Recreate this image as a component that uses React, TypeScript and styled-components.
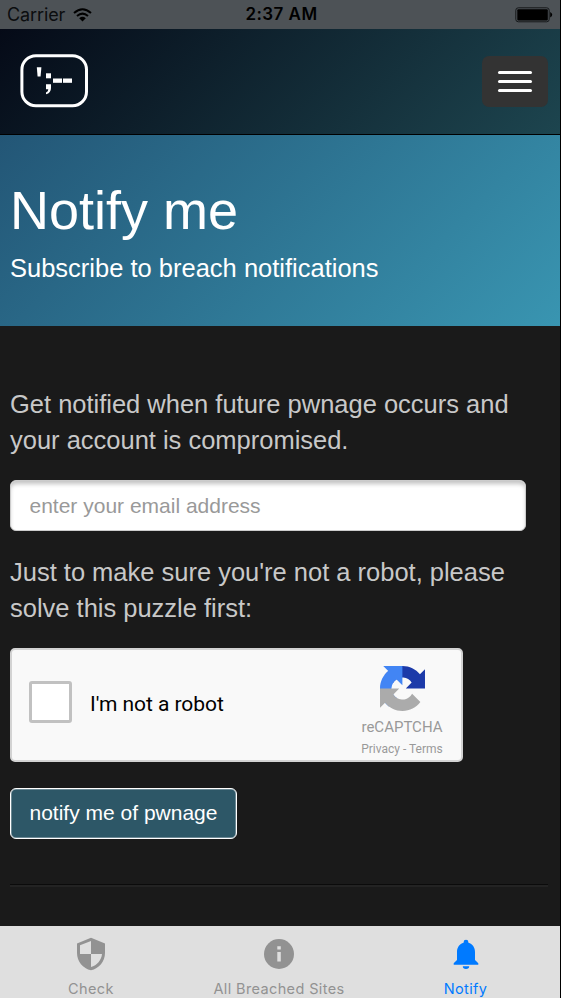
import React from "react";
import styled, { createGlobalStyle } from "styled-components";

const GlobalStyle = createGlobalStyle`
  * { box-sizing: border-box; }
  body { margin: 0; background: #000; }
`;

const Screen = styled.div`
  width: 560px;
  height: 998px;
  display: flex;
  flex-direction: column;
  overflow: hidden;
  background: #1a1a1a;
  font-family: "Liberation Sans", Arial, sans-serif;
`;

const StatusBar = styled.div`
  height: 29px;
  flex: none;
  display: grid;
  grid-template-columns: 1fr auto 1fr;
  align-items: center;
  padding: 0 7px 0 10px;
  background: #4d5256;
  color: #0b0d0f;
  font: 400 18px/29px Inter, sans-serif;
`;

const Carrier = styled.div`
  display: flex;
  align-items: center;
  gap: 8px;
  margin-left: -3px;
  letter-spacing: -0.1px;
`;

const Clock = styled.div`
  font-weight: 600;
  font-size: 17px;
  color: #000;
  letter-spacing: 0.45px;
`;

const BatterySlot = styled.div`
  display: flex;
  justify-content: flex-end;
`;

const NavBar = styled.header`
  height: 106px;
  flex: none;
  display: flex;
  justify-content: space-between;
  padding: 25px 12px 0 20px;
  border-bottom: 1px solid #000;
  background: linear-gradient(135deg, #050a17 0%, #1d454f 100%);
`;

const MenuButton = styled.button`
  width: 66px;
  height: 51px;
  margin-top: 2px;
  padding: 0 0 1px;
  border: 0;
  border-radius: 7px;
  background: #333;
  display: flex;
  flex-direction: column;
  align-items: center;
  justify-content: center;
  gap: 6px;
`;

const MenuLine = styled.span`
  width: 34px;
  height: 3px;
  border-radius: 1.5px;
  background: #fff;
`;

const Hero = styled.section`
  height: 191px;
  flex: none;
  padding: 45px 10px 0;
  color: #fff;
  background: linear-gradient(135deg, #235676 0%, #3995b1 100%);
`;

const Title = styled.h1`
  margin: 0 0 10px;
  font-size: 54px;
  font-weight: 400;
  line-height: 60px;
`;

const Subtitle = styled.p`
  margin: 0;
  font-size: 25.5px;
  line-height: 36px;
`;

const Content = styled.main`
  height: 600px;
  flex: none;
  padding: 60px 12px 0 10px;
`;

const Copy = styled.p`
  margin: 0;
  color: #c8c8c8;
  font-size: 25.5px;
  line-height: 36px;
  letter-spacing: -0.01px;
  white-space: nowrap;
`;

const EmailInput = styled.input`
  display: block;
  width: 516px;
  height: 51px;
  margin: 22px 0 23px;
  padding: 0 18.5px;
  border: 1px solid #ccc;
  border-radius: 6px;
  background: #fff;
  box-shadow: inset 0 4px 4px -1px rgba(0, 0, 0, 0.24);
  font: 400 21px "Liberation Sans", Arial, sans-serif;
  &::placeholder { color: #999; opacity: 1; }
`;

const Captcha = styled.div`
  width: 453px;
  height: 114px;
  margin-top: 22px;
  padding: 0 17px;
  display: flex;
  align-items: center;
  border: 2px solid #d3d3d3;
  border-radius: 5px;
  background: #f9f9f9;
  font-family: Roboto, sans-serif;
`;

const CheckBox = styled.div`
  width: 43px;
  height: 42px;
  margin-bottom: 6px;
  border: 3px solid #c1c1c1;
  border-radius: 3px;
  background: #fff;
`;

const CaptchaLabel = styled.div`
  margin: 0 auto 2px 18px;
  color: #000;
  font-size: 21px;
  line-height: 28px;
  letter-spacing: -0.06px;
`;

const CaptchaBrand = styled.div`
  width: 84px;
  height: 110px;
  padding-top: 16px;
  display: flex;
  flex-direction: column;
  align-items: center;
  color: #999;
  white-space: nowrap;
`;

const BrandName = styled.div`
  margin-top: 6px;
  font-size: 15px;
  line-height: 20px;
`;

const BrandLinks = styled.div`
  margin-top: 3px;
  font-size: 12px;
  line-height: 18px;
`;

const SubmitButton = styled.button`
  display: block;
  width: 227px;
  height: 51px;
  margin: 25.5px 0 45px;
  padding: 0;
  border: 1px solid #fff;
  border-radius: 6px;
  background: #2d5767;
  box-shadow: inset 0 0 0 0.5px rgba(255, 255, 255, 0.6);
  color: #fff;
  font: 400 21px "Liberation Sans", Arial, sans-serif;
  white-space: nowrap;
`;

const Divider = styled.hr`
  margin: 0;
  height: 3px;
  border: 0;
  border-top: 1px solid #0b0b0b;
  background: #232323;
`;

const TabBar = styled.nav`
  height: 72px;
  flex: none;
  display: grid;
  grid-template-columns: 182px 194px 179px;
  background: #dfdfdf;
`;

const Tab = styled.div<{ $active?: boolean }>`
  display: flex;
  flex-direction: column;
  align-items: center;
  padding-top: 10px;
  color: ${(p) => (p.$active ? "#007aff" : "#929292")};
  font: 400 14.5px/20px Inter, sans-serif;
  letter-spacing: 0.38px;
  white-space: nowrap;
`;

const TabIcon = styled.svg`
  width: 36px;
  height: 36px;
  margin-bottom: 7px;
  flex: none;
`;

const WifiIcon = () => (
  <svg width="19" height="14" viewBox="0 0 19 14">
    <g fill="none" stroke="#000" strokeWidth="2">
      <path d="M1 5 Q9.500 -2.600 18 5" />
      <path d="M4 8.100 Q9.500 3.200 15 8.100" />
    </g>
    <path d="M6.200 10.200 Q9.500 7.300 12.800 10.200 L9.500 13.500Z" fill="#000" />
  </svg>
);

const BatteryIcon = () => (
  <svg width="38" height="16" viewBox="0 0 38 16">
    <rect x=".8" y=".8" width="33.400" height="14" rx="2.500" fill="none" stroke="#16191b" />
    <rect x="2.300" y="2.200" width="30.500" height="11.200" rx="1" fill="#000" />
    <path d="M35.200 5 Q37.200 6 37.200 7.800 T35.200 10.600Z" fill="#000" />
  </svg>
);

const BrandMark = () => (
  <svg width="69" height="54" viewBox="0 0 69 54">
    <rect x="1.900" y="1.700" width="64.600" height="50" rx="14" fill="none" stroke="#fff" strokeWidth="3" />
    <g fill="#fff">
      <path d="M16.800 13.300h4.600l-.8 9.200h-3z" />
      <rect x="26" y="19.300" width="5" height="5" />
      <path d="M26 30.300h5v3.700q0 5-5 6.300v-1.900q2.300-.8 2.300-3.200H26z" />
      <rect x="33" y="24.500" width="9" height="4.300" />
      <rect x="43" y="24.500" width="9" height="4.300" />
    </g>
  </svg>
);

const CaptchaLogo = () => (
  <svg width="45" height="45" viewBox="0 0 64 64">
    <path fill="#1c3aa9" d="M64 31.955l-.033-1.370V4.687l-7.160 7.160C50.948 4.674 42.033.093 32.050.093c-10.400 0-19.622 4.960-25.458 12.640l11.736 11.860a15.550 15.550 0 0 1 4.754-5.334c2.050-1.600 4.952-2.906 8.968-2.906.485 0 .860.057 1.135.163 4.976.393 9.288 3.140 11.828 7.124l-8.307 8.307L64 31.953" />
    <path fill="#4285f4" d="M31.862.094l-1.370.033H4.594l7.160 7.160C4.580 13.147 0 22.060 0 32.046c0 10.400 4.960 19.622 12.640 25.458L24.500 45.768a15.550 15.550 0 0 1-5.334-4.754c-1.600-2.050-2.906-4.952-2.906-8.968 0-.485.057-.860.163-1.135.393-4.976 3.140-9.288 7.124-11.828l8.307 8.307L31.860.095" />
    <path fill="#ababab" d="M.001 32.045l.033 1.370v25.898l7.160-7.160c5.860 7.173 14.774 11.754 24.760 11.754 10.400 0 19.622-4.960 25.458-12.640l-11.736-11.860a15.550 15.550 0 0 1-4.754 5.334c-2.050 1.600-4.952 2.906-8.968 2.906-.485 0-.860-.057-1.135-.163-4.976-.393-9.288-3.140-11.828-7.124l8.307-8.307c-10.522.040-22.400.066-27.295-.005" />
  </svg>
);

const ShieldIcon = () => (
  <TabIcon viewBox="0 0 36 36">
    <path fill="currentColor" fillRule="evenodd" d="M18 1.700L32 7.500V17C32 25.500 26 32.500 18 34.300C10 32.500 4 25.500 4 17V7.500ZM18 5V18H29C28.500 24 24 29.500 18 31V18H7V9.300Z" />
  </TabIcon>
);

const InfoIcon = () => (
  <TabIcon viewBox="0 0 36 36">
    <circle cx="18" cy="18" r="15" fill="currentColor" />
    <path fill="#dfdfdf" d="M16.300 10.300h3.500v3.300h-3.500zM16.300 16h3.500v9.500h-3.500z" />
  </TabIcon>
);

const BellIcon = () => (
  <TabIcon viewBox="0 0 36 36">
    <path fill="currentColor" d="M15.600 6.800V6.200a2.400 2.400 0 0 1 4.800 0v.6C24.500 8 27 11.500 27 16v8l3.300 3.300v1.400H5.700v-1.400L9 24v-8c0-4.500 2.500-8 6.600-9.200zM14.800 30.200h6.400a3.200 2.800 0 0 1-6.400 0z" />
  </TabIcon>
);

export default function App() {
  return (
    <>
      <GlobalStyle />
      <Screen>
        <StatusBar>
          <Carrier>Carrier <WifiIcon /></Carrier>
          <Clock>2:37 AM</Clock>
          <BatterySlot><BatteryIcon /></BatterySlot>
        </StatusBar>
        <NavBar>
          <BrandMark />
          <MenuButton aria-label="Menu"><MenuLine /><MenuLine /><MenuLine /></MenuButton>
        </NavBar>
        <Hero>
          <Title>Notify me</Title>
          <Subtitle>Subscribe to breach notifications</Subtitle>
        </Hero>
        <Content>
          <Copy>Get notified when future pwnage occurs and<br />your account is compromised.</Copy>
          <EmailInput placeholder="enter your email address" />
          <Copy>Just to make sure you're not a robot, please<br />solve this puzzle first:</Copy>
          <Captcha>
            <CheckBox />
            <CaptchaLabel>I'm not a robot</CaptchaLabel>
            <CaptchaBrand>
              <CaptchaLogo />
              <BrandName>reCAPTCHA</BrandName>
              <BrandLinks>Privacy - Terms</BrandLinks>
            </CaptchaBrand>
          </Captcha>
          <SubmitButton>notify me of pwnage</SubmitButton>
          <Divider />
        </Content>
        <TabBar>
          <Tab><ShieldIcon />Check</Tab>
          <Tab><InfoIcon />All Breached Sites</Tab>
          <Tab $active><BellIcon />Notify</Tab>
        </TabBar>
      </Screen>
    </>
  );
}
